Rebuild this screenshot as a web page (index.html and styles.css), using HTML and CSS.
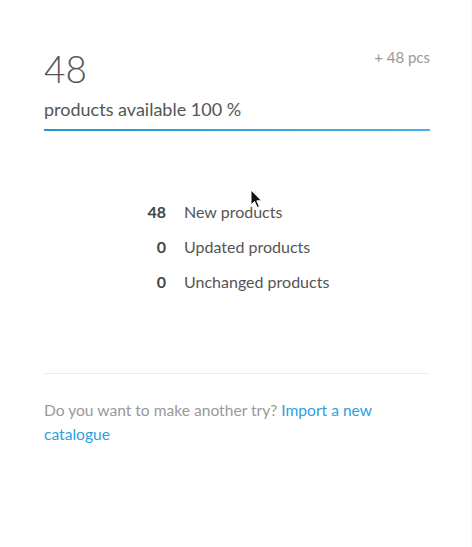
FILE: index.html
```html
<!DOCTYPE html>
<html>
<head>
<meta charset="utf-8">
<link rel="stylesheet" href="styles.css">
</head>
<body>
<div class="card">
  <div class="summary">
    <div class="summary-top">
      <div class="big-count">48</div>
      <div class="delta">+ 48 pcs</div>
    </div>
    <div class="available">products available 100 %</div>
    <div class="progress"><div class="progress-fill" style="width:100%"></div></div>
  </div>
  <div class="stats">
    <div class="stat-row"><span class="stat-num">48</span><span class="stat-label">New products</span></div>
    <div class="stat-row"><span class="stat-num">0</span><span class="stat-label">Updated products</span></div>
    <div class="stat-row"><span class="stat-num">0</span><span class="stat-label">Unchanged products</span></div>
  </div>
  <div class="divider"></div>
  <p class="retry">Do you want to make another try? <a href="#" class="link">Import a new catalogue</a></p>
  <svg class="cursor" width="14" height="20" viewBox="0 0 14 20"><path d="M1 1 L1 16 L4.5 12.5 L7.2 18.5 L9.4 17.5 L6.8 11.8 L11.5 11.8 Z" fill="#111" stroke="#fff" stroke-width="1"/></svg>
</div>
</body>
</html>
```
FILE: styles.css
```css
html, body {
  margin: 0;
  padding: 0;
  background: #fff;
}
body {
  font-family: Lato, "Open Sans", sans-serif;
  color: #555;
}
.card {
  position: relative;
  width: 472px;
  height: 547px;
  box-sizing: border-box;
  padding: 0 41px 0 44px;
  border-right: 1px solid #f6f6f6;
}
.summary {
  padding-top: 47px;
}
.summary-top {
  display: flex;
  justify-content: space-between;
  align-items: flex-start;
}
.big-count {
  font-size: 37px;
  font-weight: 300;
  line-height: 44px;
  color: #555;
}
.delta {
  font-size: 15px;
  line-height: 20px;
  color: #999;
  padding-top: 0;
}
.available {
  margin-top: 6px;
  font-size: 18px;
  line-height: 24px;
  color: #555;
}
.progress {
  margin-top: 8px;
  height: 2px;
  background: #e6e6e6;
}
.progress-fill {
  height: 2px;
  background: linear-gradient(to right, #2196d3, #45b3ea);
}
.stats {
  margin-top: 71px;
  display: flex;
  flex-direction: column;
  gap: 15px;
  padding-left: 100px;
}
.stat-row {
  display: flex;
  align-items: baseline;
  font-size: 16px;
  line-height: 20px;
}
.stat-num {
  width: 22px;
  text-align: right;
  color: #444;
  font-weight: 700;
  margin-right: 18px;
}
.stat-label {
  color: #555;
}
.divider {
  margin-top: 81px;
  height: 1px;
  background: #eee;
}
.retry {
  margin: 24px 0 0;
  font-size: 15.6px;
  line-height: 24px;
  color: #999;
}
.link {
  color: #2e9fdc;
  text-decoration: none;
}
.cursor {
  position: absolute;
  left: 250px;
  top: 189px;
}
```
